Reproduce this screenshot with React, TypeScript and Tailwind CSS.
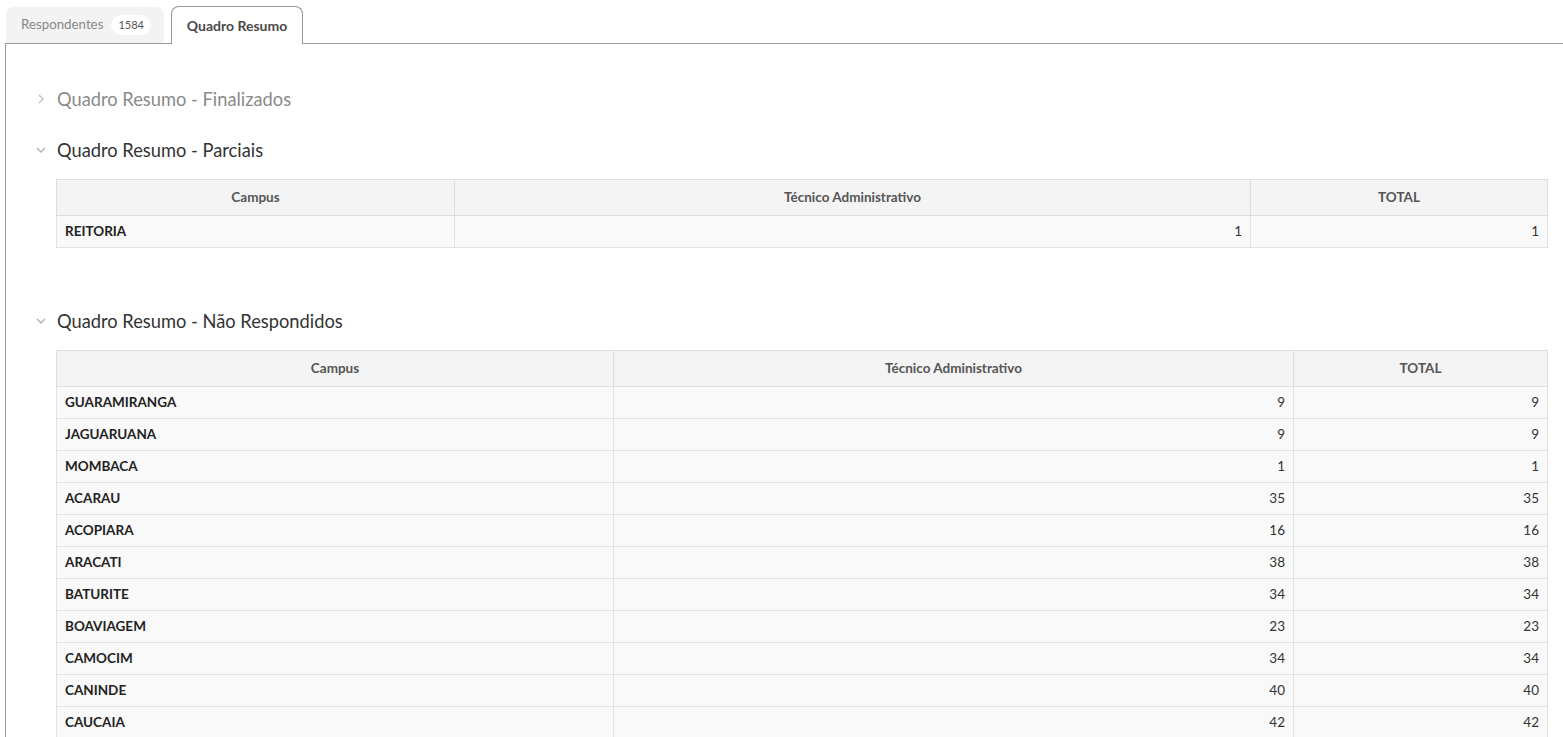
import React from "react";

type Row = { campus: string; tecnico: number; total: number };

const parciais: Row[] = [{ campus: "REITORIA", tecnico: 1, total: 1 }];

const naoRespondidos: Row[] = [
  { campus: "GUARAMIRANGA", tecnico: 9, total: 9 },
  { campus: "JAGUARUANA", tecnico: 9, total: 9 },
  { campus: "MOMBACA", tecnico: 1, total: 1 },
  { campus: "ACARAU", tecnico: 35, total: 35 },
  { campus: "ACOPIARA", tecnico: 16, total: 16 },
  { campus: "ARACATI", tecnico: 38, total: 38 },
  { campus: "BATURITE", tecnico: 34, total: 34 },
  { campus: "BOAVIAGEM", tecnico: 23, total: 23 },
  { campus: "CAMOCIM", tecnico: 34, total: 34 },
  { campus: "CANINDE", tecnico: 40, total: 40 },
  { campus: "CAUCAIA", tecnico: 42, total: 42 },
  { campus: "CEDRO", tecnico: 28, total: 28 },
  { campus: "CRATEUS", tecnico: 31, total: 31 },
];

function Chevron({ open }: { open: boolean }) {
  return (
    <svg width="10" height="10" viewBox="0 0 10 10" className="shrink-0">
      {open ? (
        <path d="M1 3 L5 7 L9 3" fill="none" stroke="#b5b5b5" strokeWidth="1.5" />
      ) : (
        <path d="M3 1 L7 5 L3 9" fill="none" stroke="#c4c4c4" strokeWidth="1.5" />
      )}
    </svg>
  );
}

function Heading({ title, open }: { title: string; open: boolean }) {
  return (
    <div className="flex h-[24px] items-center gap-[11px]">
      <Chevron open={open} />
      <span className={`text-[18.3px] leading-[24px] ${open ? "text-[#333]" : "text-[#8a8a8a]"}`}>{title}</span>
    </div>
  );
}

function ResumoTable({ rows, widths }: { rows: Row[]; widths: [string, string, string] }) {
  return (
    <table className="ml-[20px] w-[1491px] table-fixed border-collapse">
      <colgroup>
        <col className={widths[0]} />
        <col className={widths[1]} />
        <col className={widths[2]} />
      </colgroup>
      <thead>
        <tr className="h-[36px] bg-[#f4f4f4]">
          <th className="border border-[#dddddd] text-[13.5px] font-bold text-[#555]">Campus</th>
          <th className="border border-[#dddddd] text-[13.5px] font-bold text-[#555]">Técnico Administrativo</th>
          <th className="border border-[#dddddd] text-[13.5px] font-bold text-[#555]">TOTAL</th>
        </tr>
      </thead>
      <tbody>
        {rows.map((r) => (
          <tr key={r.campus} className="h-[32px] bg-[#f9f9f9]">
            <td className="border border-[#e2e2e2] px-[8px] text-[13.5px] font-bold text-[#222]">{r.campus}</td>
            <td className="border border-[#e2e2e2] px-[8px] text-right text-[13.5px] text-[#333]">{r.tecnico}</td>
            <td className="border border-[#e2e2e2] px-[8px] text-right text-[13.5px] text-[#333]">{r.total}</td>
          </tr>
        ))}
      </tbody>
    </table>
  );
}

export default function App() {
  return (
    <div className="h-[737px] overflow-hidden bg-white font-['Lato','Liberation_Sans',sans-serif]">
      <div className="flex items-end gap-[7px] pl-[6px] pt-[6px]">
        <div className="flex h-[36px] w-[158px] items-center gap-[8px] rounded-t-[8px] bg-[#f3f3f3] pl-[15px]">
          <span className="text-[13.3px] text-[#888]">Respondentes</span>
          <span className="rounded-full bg-white px-[7px] py-[2px] text-[11px] text-[#555]">1584</span>
        </div>
        <div className="relative z-10 -mb-px flex h-[38px] w-[132px] items-center justify-center rounded-t-[8px] border border-b-0 border-[#999] bg-white">
          <span className="text-[14px] font-bold text-[#4a4a4a]">Quadro Resumo</span>
        </div>
      </div>
      <div className="ml-[5px] border-l border-t border-[#999] pb-[40px] pl-[30px] pr-[16px] pt-[43px]">
        <Heading title="Quadro Resumo - Finalizados" open={false} />
        <div className="mt-[27px]">
          <Heading title="Quadro Resumo - Parciais" open={true} />
        </div>
        <div className="mt-[17px]">
          <ResumoTable rows={parciais} widths={["w-[398px]", "w-[796px]", "w-[297px]"]} />
        </div>
        <div className="mt-[61px]">
          <Heading title="Quadro Resumo - Não Respondidos" open={true} />
        </div>
        <div className="mt-[17px]">
          <ResumoTable rows={naoRespondidos} widths={["w-[557px]", "w-[680px]", "w-[254px]"]} />
        </div>
      </div>
    </div>
  );
}
